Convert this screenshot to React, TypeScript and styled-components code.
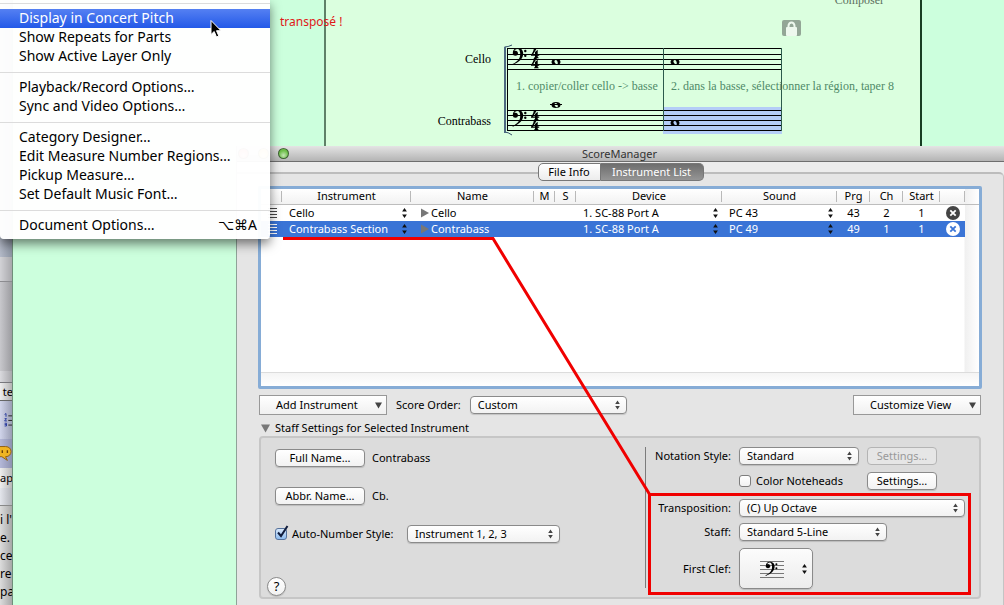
import React from "react";
import styled, { createGlobalStyle, css } from "styled-components";

const ui = `"Noto Sans", "Open Sans", "DejaVu Sans", sans-serif`;
const serif = `"Liberation Serif", serif`;

const GlobalStyle = createGlobalStyle`
  * { box-sizing: border-box; }
  html, body { margin: 0; height: 100%; overflow: hidden; }
  body { font-family: ${ui}; font-size: 11px; line-height: 16px; color: #000; }
  button, select, input { font: inherit; color: inherit; margin: 0; }
`;

const Desktop = styled.div`
  position: relative;
  display: flex;
  min-height: 100vh;
  overflow: hidden;
  background: #ccffdd;
`;

/* ---------- browser window peeking out on the left ---------- */

const Sliver = styled.aside`
  width: 13px;
  height: 100vh;
  flex: none;
  display: flex;
  flex-direction: column;
  overflow: hidden;
  white-space: nowrap;
  background: linear-gradient(90deg, #dcdcdc, #a8a8a8);
  border-right: 1px solid #6f8f7a;
`;

const SliverBand = styled.div<{ $h: number; $bg: string; $line?: string }>`
  height: ${(p) => p.$h}px;
  flex: none;
  display: flex;
  align-items: center;
  background: ${(p) => p.$bg};
  border-bottom: 1px solid ${(p) => p.$line ?? "transparent"};
`;

const SliverText = styled.p`
  margin: 0;
  padding-top: 5px;
  font-size: 12px;
  line-height: 18px;
`;

/* ---------- score document ---------- */

const ScoreDocument = styled.main`
  flex: 1;
  display: flex;
  height: 146px;
`;

const DocumentMargin = styled.div`
  width: 311px;
  flex: none;
`;

const Page = styled.section`
  flex: 1;
  display: flex;
  flex-direction: column;
  margin-right: 82px;
  background: #dbffdf;
  border-left: 2px solid #5f8168;
  border-right: 2px solid #173d22;
`;

const Composer = styled.p`
  margin: -8px 36px 0 0;
  text-align: right;
  font: 12px/16px ${serif};
  color: #5c6f60;
`;

const ScoreDrawing = styled.svg`
  display: block;
  margin: 30px 0 0 177px;
  font-family: ${serif};
`;

const RedNote = styled.p`
  position: absolute;
  left: 280px;
  top: 13px;
  margin: 0;
  font-size: 12px;
  line-height: 17px;
  color: #e01818;
`;

/* ---------- ScoreManager window ---------- */

const Window = styled.section`
  position: absolute;
  left: 236px;
  right: 0;
  top: 146px;
  min-height: calc(100vh - 146px);
  display: flex;
  flex-direction: column;
  background: #ececec;
  border-left: 1px solid #8fa398;
`;

const TitleBar = styled.header`
  height: 16px;
  display: flex;
  align-items: center;
  background: linear-gradient(#e4e4e4, #b4b4b4);
  border-bottom: 1px solid #6e6e6e;
`;

const WindowTitle = styled.h1`
  flex: 1;
  margin: 0 54px 0 0;
  text-align: center;
  font-size: 11px;
  line-height: 15px;
  font-weight: 400;
  color: #333;
`;

const Lights = styled.div`
  display: flex;
  gap: 9px;
  width: 52px;
  padding-left: 1px;
  flex: none;
`;

const Light = styled.button<{ $color: string }>`
  width: 11px;
  height: 11px;
  flex: none;
  padding: 0;
  border: 1px solid rgba(40, 60, 40, 0.7);
  border-radius: 50%;
  background: radial-gradient(circle at 50% 70%, #fff9, transparent 60%), ${(p) => p.$color};
`;

const TabBar = styled.nav`
  position: relative;
  display: flex;
  justify-content: center;
  padding: 1px 0 0;
`;

const Tab = styled.button<{ $active?: boolean; $w: number }>`
  width: ${(p) => p.$w}px;
  height: 18px;
  padding: 0;
  line-height: 16px;
  border: 1px solid #777;
  border-radius: ${(p) => (p.$active ? "0 5px 5px 0" : "5px 0 0 5px")};
  border-left-width: ${(p) => (p.$active ? 0 : 1)}px;
  background: ${(p) => (p.$active ? "linear-gradient(#6e6e6e, #959595)" : "linear-gradient(#fff, #ececec)")};
  color: ${(p) => (p.$active ? "#fff" : "#000")};
`;

const TabPanel = styled.div`
  flex: 1;
  margin-top: -9px;
  padding: 12px 22px 6px 21px;
  background: #e5e5e5;
  border-top: 2px solid #bcbcbc;
  border-right: 1px solid #c4c4c4;
  border-top-right-radius: 5px;
`;

const ListFrame = styled.div`
  height: 203px;
  margin-right: -1px;
  display: flex;
  flex-direction: column;
  background: linear-gradient(90deg, #fff calc(100% - 15px), #f0f0f0 calc(100% - 14px), #fff);
  border: 3px solid #86acd6;
  border-radius: 2px;
`;

const ListBottom = styled.div`
  height: 14px;
  margin-top: auto;
  border-top: 1px solid #dcdcdc;
  background: linear-gradient(#f4f4f4, #fff);
`;

const Table = styled.table`
  width: 100%;
  table-layout: fixed;
  border-collapse: separate;
  border-spacing: 0;
`;

const Th = styled.th`
  height: 16px;
  padding: 0 0 1px;
  font-weight: 400;
  line-height: 14px;
  text-align: center;
  border-bottom: 1px solid #bdbdbd;
  background: linear-gradient(#b9b9b9, #b9b9b9) right 2px / 1px 11px no-repeat, linear-gradient(#fff, #f2f2f2);
  &:last-child { background: linear-gradient(90deg, #f0f0f0, #fff); }
`;

const Tr = styled.tr<{ $selected?: boolean }>`
  color: ${(p) => (p.$selected ? "#fff" : "#000")};
  td:not(:last-child) { background: ${(p) => (p.$selected ? "#3a74d6" : "#fff")}; }
`;

const Td = styled.td<{ $center?: boolean }>`
  height: 16px;
  padding: 0 0 0 ${(p) => (p.$center ? 0 : 7)}px;
  line-height: 16px;
  white-space: nowrap;
  text-align: ${(p) => (p.$center ? "center" : "left")};
`;

const Cell = styled.div`
  display: flex;
  align-items: center;
  justify-content: space-between;
  padding-right: 3px;
`;

const NameCell = styled.div`
  display: flex;
  align-items: center;
  gap: 2px;
  padding-left: 3px;
`;

const IconButton = styled.button`
  display: block;
  width: 14px;
  height: 14px;
  margin: 0 auto;
  padding: 0;
  border: 0;
  background: none;
  svg { display: block; }
`;

const Toolbar = styled.div`
  display: flex;
  align-items: center;
  margin: 6px 0 0 1px;
  height: 20px;
`;

const PullDown = styled.button`
  width: 128px;
  height: 20px;
  display: flex;
  align-items: center;
  padding: 0 4px 0 16px;
  border: 1px solid #989898;
  background: linear-gradient(#fff, #f0f0f0);
  svg { margin-left: auto; }
`;

const ScoreOrder = styled.label`
  display: flex;
  align-items: center;
  gap: 9px;
  margin: 0 auto 0 9px;
`;

const SelectBox = styled.span<{ $w: number }>`
  position: relative;
  display: block;
  width: ${(p) => p.$w}px;
  svg { position: absolute; right: 6px; top: 4px; pointer-events: none; }
`;

const face = css`
  border: 1px solid #8a8a8a;
  border-radius: 4px;
  background: linear-gradient(#fff, #f2f2f2);
  box-shadow: 0 1px 1px rgba(0, 0, 0, 0.15);
`;

const Select = styled.select`
  ${face}
  display: block;
  appearance: none;
  width: 100%;
  height: 18px;
  padding: 0 20px 0 7px;
  line-height: 16px;
`;

const PushButton = styled.button<{ $w: number }>`
  ${face}
  width: ${(p) => p.$w}px;
  height: 18px;
  padding: 0;
  line-height: 16px;
  text-align: center;
  &:disabled { color: #999; border-color: #b4b4b4; background: #e6e6e6; box-shadow: none; }
`;

const Disclosure = styled.button`
  display: flex;
  align-items: center;
  gap: 5px;
  margin: 5px 0 0 3px;
  padding: 0;
  border: 0;
  background: none;
`;

const Settings = styled.div`
  display: flex;
  margin: 0 0 0 1px;
  height: 163px;
  background: #dcdcdc;
  border: 2px solid #c6c6c6;
  border-radius: 4px;
`;

const NamesColumn = styled.div`
  flex: 1;
  display: flex;
  flex-direction: column;
  align-items: flex-start;
  padding: 11px 0 0 14px;
`;

const NameRow = styled.div`
  display: flex;
  align-items: center;
  gap: 7px;
  height: 18px;
  margin-bottom: 20px;
`;

const CheckLabel = styled.label`
  display: flex;
  align-items: center;
  gap: 5px;
  min-width: 125px;
`;

const Check = styled.input`
  appearance: none;
  width: 12px;
  height: 12px;
  border: 1px solid #7d7d7d;
  border-radius: 3px;
  background: linear-gradient(#fff, #f2f2f2);
  &:checked {
    border-color: #54719c;
    background: linear-gradient(#d8e8fa, #8fbdf0);
  }
`;

const CheckWrap = styled.span`
  position: relative;
  display: flex;
  svg { position: absolute; left: 1px; top: -3px; pointer-events: none; }
`;

const Help = styled.button`
  ${face}
  width: 19px;
  height: 19px;
  margin: 14px 0 0 -8px;
  padding: 0;
  border-radius: 50%;
  font-size: 13px;
  line-height: 17px;
`;

const StaffColumn = styled.div`
  width: 334px;
  flex: none;
  display: flex;
  flex-direction: column;
  margin: 9px 0 9px;
  border-left: 1px solid #7c7c7c;
`;

const Field = styled.div<{ $h?: number; $mt?: number }>`
  display: grid;
  grid-template-columns: 85px auto auto 1fr;
  column-gap: 8px;
  align-items: center;
  height: ${(p) => p.$h ?? 18}px;
  margin-top: ${(p) => p.$mt ?? 0}px;
  white-space: nowrap;
`;

const FieldLabel = styled.label`
  text-align: right;
`;

const ColorCheck = styled(CheckLabel)`
  width: 120px;
  min-width: 0;
`;

const ClefButton = styled.button`
  ${face}
  width: 74px;
  height: 41px;
  padding: 0 4px 0 20px;
  display: flex;
  align-items: center;
  justify-content: space-between;
  border-radius: 5px;
  background: linear-gradient(#fcfcfc, #ececec);
`;

const Annotation = styled.svg`
  position: absolute;
  left: 46px;
  top: 90px;
  pointer-events: none;
`;

/* ---------- open menu ---------- */

const Menu = styled.div`
  position: absolute;
  left: 0;
  top: 0;
  width: 270px;
  padding-bottom: 4px;
  background: rgba(255, 255, 255, 0.97);
  border-radius: 0 0 4px 4px;
  box-shadow: 0 5px 11px rgba(0, 0, 0, 0.5);
`;

const Separator = styled.hr<{ $first?: boolean }>`
  margin: ${(p) => (p.$first ? 3 : 6)}px 0 5px;
  border: 0;
  border-top: 1px solid #dcdcdc;
`;

const MenuItem = styled.button<{ $active?: boolean }>`
  display: flex;
  justify-content: space-between;
  width: 100%;
  height: 19px;
  padding: 0 13px 0 19px;
  border: 0;
  font-size: 14px;
  line-height: 18px;
  text-align: left;
  color: ${(p) => (p.$active ? "#fff" : "#000")};
  background: ${(p) => (p.$active ? "linear-gradient(#5580f2, #2359e8)" : "none")};
`;

const Pointer = styled.svg`
  position: absolute;
  left: 210px;
  top: 19px;
`;

/* ---------- small drawings ---------- */

const UpDown = ({ color = "#444", tall }: { color?: string; tall?: boolean }) => (
  <svg width="7" height={tall ? 12 : 10} viewBox={tall ? "0 0 7 12" : "0 0 7 10"} fill={color} aria-hidden>
    <path d={tall ? "M3.500 1 5.900 4.500H1.100zM3.500 11 1.100 7.500h4.800z" : "M3.500 .5 5.800 4H1.200zM3.500 9.500 1.200 6h4.600z"} />
  </svg>
);

const Down = ({ color = "#444", size = 7 }: { color?: string; size?: number }) => (
  <svg width={size} height={size} viewBox="0 0 8 8" fill={color} aria-hidden>
    <path d="M0 .5h8L4 7.500z" />
  </svg>
);

const BassClef = ({ x, y }: { x: number; y: number }) => (
  <g transform={`translate(${x} ${y})`}>
    <circle cx="3.400" cy="5.300" r="2.500" />
    <path d="M.9 5.300C.6 2 2.800-.2 6 0c3.500.2 5.400 2.600 5.200 6-.3 5-4.300 8.300-10.400 10.700l-.3-.7C5.800 13.500 8.200 10.500 8.200 5.900 8.200 2.800 7.300.9 5.400.9 3.400.9 2 2.500 2 4.600z" />
    <circle cx="13.300" cy="3" r="1.200" />
    <circle cx="13.300" cy="7.800" r="1.200" />
  </g>
);

const WholeNote = ({ x, y }: { x: number; y: number }) => (
  <g transform={`translate(${x} ${y})`}>
    <path
      fillRule="evenodd"
      d="M-4.500 0a4.500 3 0 1 0 9 0a4.500 3 0 1 0-9 0zM-1.600-1.100C-.8-2.600.8-2.200 1.400-.6s.6 2.600-.3 2.900-3-2-2.700-3.400z"
    />
  </g>
);

const Four = ({ x, y }: { x: number; y: number }) => (
  <path
    transform={`translate(${x} ${y})`}
    fillRule="evenodd"
    d="M2.800 0h3.200L2 6.400h2V4l2.700-2.300v4.700H8.200v1.300H6.700v1.300l1 .7v.6H3v-.6l1-.7V7.700H0V6.700C1.800 4.800 2.700 2.600 2.800 0z"
  />
);

/* one staff: five lines, clef, time signature */
const Staff = ({ y, lines }: { y: number; lines: number[] }) => (
  <g>
    {lines.map((d) => (
      <rect key={d} x="4" y={y + d} width="275" height="1" />
    ))}
    <BassClef x={9} y={y} />
    <Four x={28} y={y} />
    <Four x={28} y={y + 10} />
  </g>
);

const Score = () => (
  <ScoreDrawing width="390" height="100" viewBox="0 0 390 100" overflow="visible" role="img" aria-label="Score">
    <rect x="160" y="69" width="119" height="27" fill="#b4cdf7" />
    <Staff y={10} lines={[0, 6, 11, 16, 21]} />
    <Staff y={72} lines={[0, 5, 10, 15, 20]} />
    <g fill="#2c5a4c">
      <rect x="160" y="10" width="1" height="83" />
      <rect x="278" y="10" width="1" height="83" />
    </g>
    <path d="M9 7Q5 9 1.500 9M1.500 94Q5 94 9 97" fill="none" stroke="#33506a" />
    <rect x="1" y="9" width="2" height="86" fill="#4d6a80" />
    <rect x="4" y="10" width="1" height="83" />
    <WholeNote x={53} y={24} />
    <WholeNote x={172} y={24} />
    <WholeNote x={53} y={67} />
    <rect x="47" y="66" width="12" height="1" />
    <WholeNote x={172} y={85} />
    <g fontSize="12" textAnchor="end">
      <text x="-12" y="25">Cello</text>
      <text x="-12" y="87">Contrabass</text>
    </g>
    <g fontSize="12" fill="#4f8a68">
      <text x="13" y="52">1. copier/coller cello -&gt; basse</text>
      <text x="168" y="52">2. dans la basse, sélectionner la région, taper 8</text>
    </g>
    <g transform="translate(279 -18)">
      <rect width="19" height="16" rx="2" fill="#93a696" />
      <path d="M6.500 8V6a3 3.500 0 0 1 6 0v2" fill="none" stroke="#eef8ee" strokeWidth="2" />
      <rect x="4" y="7" width="11" height="9" rx="1" fill="#eef8ee" />
    </g>
  </ScoreDrawing>
);

const instruments = [
  { instrument: "Cello", name: "Cello", device: "1. SC-88 Port A", sound: "PC 43", prg: 43, ch: 2, start: 1 },
  { instrument: "Contrabass Section", name: "Contrabass", device: "1. SC-88 Port A", sound: "PC 49", prg: 49, ch: 1, start: 1, selected: true },
];

const columns: [string, number | undefined][] = [
  ["", 21], ["Instrument", 129], ["Name", 123], ["M", 21], ["S", 21], ["Device", undefined],
  ["Sound", 115], ["Prg", 33], ["Ch", 33], ["Start", 37], ["", 25], ["", 14],
];

const InstrumentTable = () => (
  <Table>
    <colgroup>
      {columns.map(([, w], i) => <col key={i} width={w} />)}
    </colgroup>
    <thead>
      <tr>{columns.map(([t], i) => <Th key={i}>{t}</Th>)}</tr>
    </thead>
    <tbody>
      {instruments.map((r) => (
        <Tr key={r.name} $selected={r.selected}>
          <Td>
            <svg width="14" height="12" viewBox="0 0 14 12" stroke={r.selected ? "#fff" : "#444"} display="block" aria-hidden>
              <path d="M0 1.500h9M0 4.500h9M0 7.500h9M0 10.500h9" />
            </svg>
          </Td>
          <Td><Cell>{r.instrument}<UpDown color="#111" tall /></Cell></Td>
          <Td>
            <NameCell>
              <svg width="8" height="10" viewBox="0 0 8 10" fill="#777" aria-hidden><path d="M0 .5v9L8 5z" /></svg>
              {r.name}
            </NameCell>
          </Td>
          <Td />
          <Td />
          <Td><Cell>{r.device}<UpDown color="#111" tall /></Cell></Td>
          <Td><Cell>{r.sound}<UpDown color="#111" tall /></Cell></Td>
          <Td $center>{r.prg}</Td>
          <Td $center>{r.ch}</Td>
          <Td $center>{r.start}</Td>
          <Td $center>
            <IconButton aria-label={`Delete ${r.name}`}>
              <svg width="14" height="14" viewBox="0 0 14 14">
                <circle cx="7" cy="7" r="7" fill={r.selected ? "#fff" : "#444"} />
                <path d="m4.300 4.300 5.400 5.400m0-5.400-5.400 5.400" stroke={r.selected ? "#3a74d6" : "#fff"} strokeWidth="1.800" />
              </svg>
            </IconButton>
          </Td>
          <Td />
        </Tr>
      ))}
    </tbody>
  </Table>
);

const PopUp = ({ id, value, w }: { id: string; value: string; w: number }) => (
  <SelectBox $w={w}>
    <Select id={id} defaultValue={value}><option>{value}</option></Select>
    <UpDown />
  </SelectBox>
);

const menuGroups: string[][] = [
  ["Display in Concert Pitch", "Show Repeats for Parts", "Show Active Layer Only"],
  ["Playback/Record Options…", "Sync and Video Options…"],
  ["Category Designer…", "Edit Measure Number Regions…", "Pickup Measure…", "Set Default Music Font…"],
  ["Document Options…"],
];

export default function App() {
  return (
    <Desktop>
      <GlobalStyle />
      <Sliver>
        <SliverBand $h={257} $bg="linear-gradient(90deg, #b4bac8, #8c94a2)" />
        <SliverBand $h={25} $bg="linear-gradient(90deg, #d2d2d6, #a8a8ac)" $line="#8c8c90" />
        <SliverBand $h={89} $bg="linear-gradient(90deg, #c8c8cc, #9c9ca0)" />
        <SliverBand $h={12} $bg="linear-gradient(90deg, #dadade, #a8a8ac)" $line="#77777c" />
        <SliverBand $h={18} $bg="linear-gradient(90deg, #eee, #b4b4b4)" $line="#666"><span>&nbsp;te</span></SliverBand>
        <SliverBand $h={38} $bg="linear-gradient(90deg, #d0d4ea, #9a9eb4)">
          <svg width="13" height="16" viewBox="0 0 13 16" aria-hidden>
            <path d="M5 2l1.500-1v3.500M5 6.500h2L5 9h2.500M5 11.500h2v3H5M5 13h2" fill="none" stroke="#22349c" />
            <path d="M9 3.500h4M9 8.500h4M9 13.500h4" stroke="#222" />
          </svg>
        </SliverBand>
        <SliverBand $h={29} $bg="linear-gradient(90deg, #b4b8d8, #8e92b0)">
          <svg width="13" height="18" viewBox="0 0 13 18" aria-hidden>
            <path d="M-4 2H6c8 0 8 11 0 11l2 4-6-4h-6z" fill="#f0b422" stroke="#8c5a10" />
            <path d="M2.500 6v3M8 6v3" stroke="#6b4208" strokeWidth="1.500" />
          </svg>
        </SliverBand>
        <SliverBand $h={20} $bg="linear-gradient(90deg, #eee, #b8b8b8)"><span>ap</span></SliverBand>
        <SliverBand $h={18} $bg="linear-gradient(90deg, #e4e6ec, #b0b2b8)" $line="#888" />
        <SliverText>i l'<br />e.<br />ce<br />re<br />pa</SliverText>
      </Sliver>

      <ScoreDocument>
        <DocumentMargin />
        <Page>
          <Composer>Composer</Composer>
          <Score />
        </Page>
      </ScoreDocument>
      <RedNote>transposé !</RedNote>

      <Window>
        <TitleBar>
          <Lights>
            <Light $color="#e8685c" aria-label="Close" />
            <Light $color="#eebc48" aria-label="Minimize" />
            <Light $color="#6ebf4a" aria-label="Zoom" />
          </Lights>
          <WindowTitle>ScoreManager</WindowTitle>
        </TitleBar>
        <TabBar>
          <Tab $w={63}>File Info</Tab>
          <Tab $w={103} $active>Instrument List</Tab>
        </TabBar>
        <TabPanel>
          <ListFrame>
            <InstrumentTable />
            <ListBottom />
          </ListFrame>

          <Toolbar>
            <PullDown>Add Instrument<Down /></PullDown>
            <ScoreOrder htmlFor="order">Score Order:<PopUp id="order" value="Custom" w={157} /></ScoreOrder>
            <PullDown>Customize View<Down /></PullDown>
          </Toolbar>

          <Disclosure><Down color="#777" size={9} />Staff Settings for Selected Instrument</Disclosure>

          <Settings>
            <NamesColumn>
              <NameRow><PushButton $w={90}>Full Name…</PushButton>Contrabass</NameRow>
              <NameRow><PushButton $w={90}>Abbr. Name…</PushButton>Cb.</NameRow>
              <NameRow>
                <CheckLabel>
                  <CheckWrap>
                    <Check type="checkbox" defaultChecked />
                    <svg width="13" height="13" viewBox="0 0 13 13" fill="none" stroke="#101c3c" strokeWidth="2" aria-hidden>
                      <path d="M2 7.500 5 11 11.500 1" />
                    </svg>
                  </CheckWrap>
                  Auto-Number Style:
                </CheckLabel>
                <PopUp id="auto" value="Instrument 1, 2, 3" w={153} />
              </NameRow>
              <Help aria-label="Help">?</Help>
            </NamesColumn>

            <StaffColumn>
              <Field>
                <FieldLabel htmlFor="notation">Notation Style:</FieldLabel>
                <PopUp id="notation" value="Standard" w={120} />
                <PushButton $w={70} disabled>Settings…</PushButton>
              </Field>
              <Field $mt={7}>
                <span />
                <ColorCheck><Check type="checkbox" />Color Noteheads</ColorCheck>
                <PushButton $w={70}>Settings…</PushButton>
              </Field>
              <Field $mt={9}>
                <FieldLabel htmlFor="transposition">Transposition:</FieldLabel>
                <PopUp id="transposition" value="(C) Up Octave" w={226} />
              </Field>
              <Field $mt={6}>
                <FieldLabel htmlFor="staff">Staff:</FieldLabel>
                <PopUp id="staff" value="Standard 5-Line" w={148} />
              </Field>
              <Field $mt={7} $h={41}>
                <FieldLabel htmlFor="clef">First Clef:</FieldLabel>
                <ClefButton id="clef">
                  <svg width="24" height="18" viewBox="0 0 24 18" aria-hidden>
                    <path d="M0 1.500h24M0 5.500h24M0 9.500h24M0 13.500h24M0 17.500h24" stroke="#777" />
                    <g transform="scale(.85)"><BassClef x={6} y={2} /></g>
                  </svg>
                  <UpDown color="#111" tall />
                </ClefButton>
              </Field>
            </StaffColumn>
          </Settings>
        </TabPanel>
        <Annotation width="692" height="362" viewBox="0 0 692 362" fill="none" stroke="#f00000" strokeWidth="3" aria-hidden>
          <path d="M0 2.500H210L367 259" />
          <rect x="366.500" y="258.500" width="320" height="99" />
        </Annotation>
      </Window>

      <Menu role="menu">
        {menuGroups.map((group, g) => (
          <React.Fragment key={g}>
            <Separator $first={g === 0} />
            {group.map((label, i) => (
              <MenuItem key={label} role="menuitem" $active={g === 0 && i === 0}>
                <span>{label}</span>
                {label === "Document Options…" && <span>⌥⌘A</span>}
              </MenuItem>
            ))}
          </React.Fragment>
        ))}
      </Menu>
      <Pointer width="12" height="20" viewBox="0 0 12 20" aria-hidden>
        <path d="M1 1.500v14l3.200-3 2.300 5.500 2.300-1-2.300-5.300H11z" fill="#000" stroke="#fff" />
      </Pointer>
    </Desktop>
  );
}
